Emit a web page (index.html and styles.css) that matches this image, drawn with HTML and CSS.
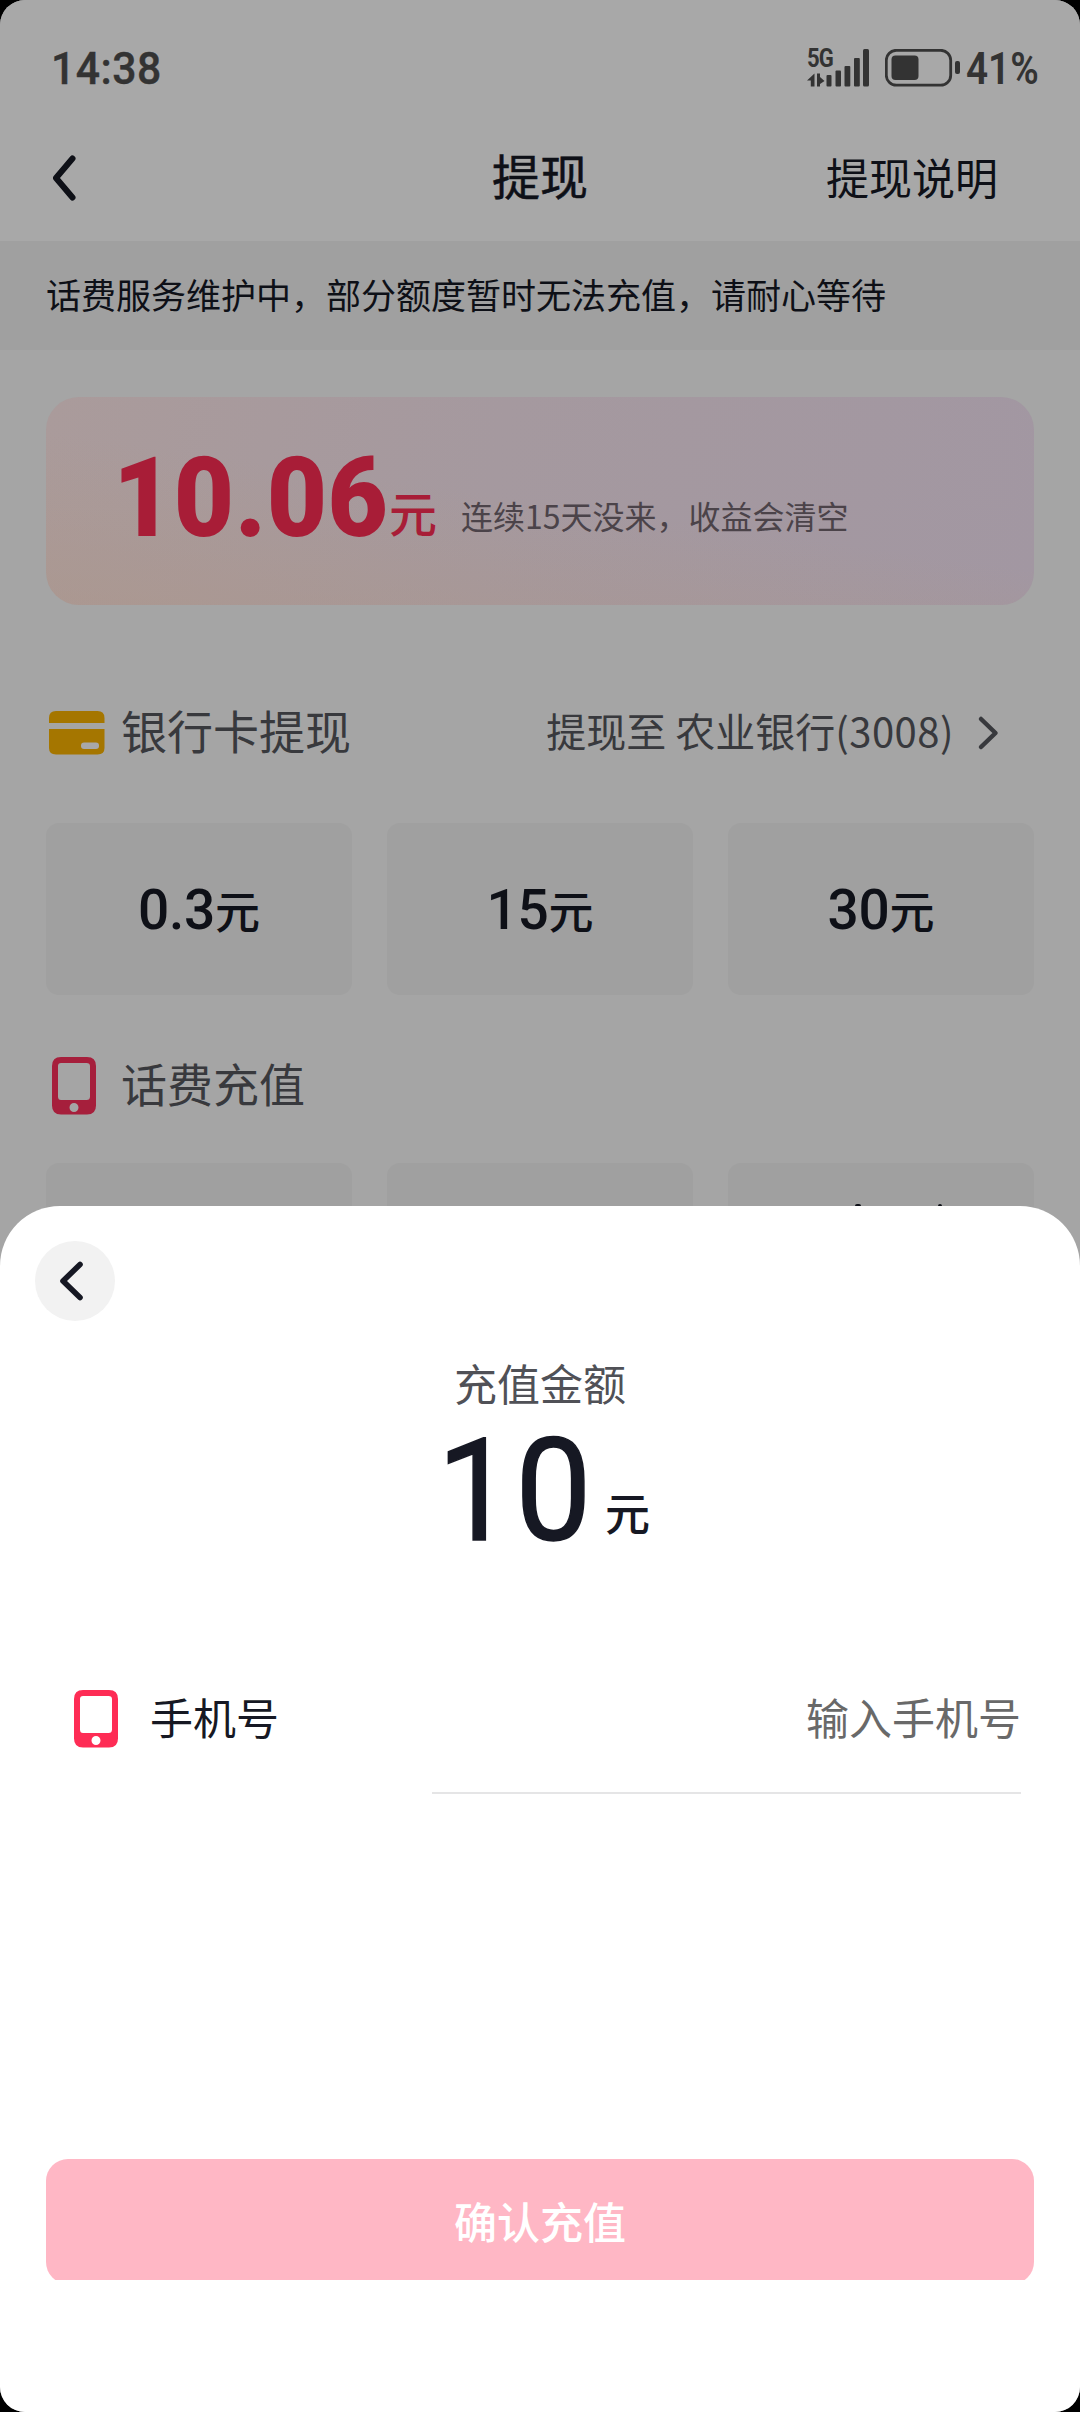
FILE: index.html
```html
<!DOCTYPE html>
<html lang="zh-CN">
<head>
<meta charset="utf-8">
<title>提现</title>
<link rel="stylesheet" href="styles.css">
</head>
<body>
<div class="screen">
  <div class="statusbar">
    <span class="time">14:38</span>
    <div class="status-right">
      <div class="signal">
        <span class="net">5G</span>
        <svg width="62" height="38" viewBox="0 0 62 38" fill="#333">
          <path d="M7.500 24.500V37.500H3.800V31.500H0Z M10 24.500H13V28L17.500 32L13 35V37.500H10Z"/>
          <rect x="19.500" y="26" width="5" height="11.500" rx="1"/>
          <rect x="28.500" y="21.500" width="5.500" height="16" rx="1"/>
          <rect x="37.500" y="17" width="5.800" height="20.500" rx="1"/>
          <rect x="47" y="9" width="5.800" height="28.500" rx="1"/>
          <rect x="56" y="0" width="6" height="37.500" rx="1.500"/>
        </svg>
      </div>
      <svg width="76" height="38" viewBox="0 0 76 38" fill="#333">
        <rect x="1.300" y="1.300" width="64.400" height="34.900" rx="10" fill="none" stroke="#333" stroke-width="2.800"/>
        <rect x="6.500" y="6.500" width="27" height="24.500" rx="4"/>
        <rect x="70" y="12" width="5" height="13" rx="2"/>
      </svg>
      <span class="percent">41%</span>
    </div>
  </div>

  <div class="navbar">
    <svg class="back" width="24" height="48" viewBox="0 0 24 48" fill="none" stroke="#0e1017" stroke-width="6" stroke-linecap="round" stroke-linejoin="round"><path d="M20.500 4.500L4 24L20.500 43.500"/></svg>
    <h1 class="title">提现</h1>
    <a class="help">提现说明</a>
  </div>

  <p class="notice">话费服务维护中，部分额度暂时无法充值，请耐心等待</p>

  <div class="content">
    <div class="balance">
      <span class="balance-num">10.06</span>
      <span class="balance-unit">元</span>
      <span class="balance-tip">连续15天没来，收益会清空</span>
    </div>

    <div class="section-head bank">
      <svg width="56" height="44" viewBox="0 0 56 44">
        <path d="M0 12V7Q0 0 7 0H48.500Q55.500 0 55.500 7V12ZM0 18H55.500V37Q55.500 43.500 48.500 43.500H7Q0 43.500 0 37Z" fill="#a57600"/>
        <rect x="32" y="31.500" width="18" height="6.500" rx="3" fill="#a8a8a8"/>
      </svg>
      <span class="section-title">银行卡提现</span>
      <span class="account">提现至 农业银行<span class="digits">(3008)</span></span>
      <svg width="22" height="36" viewBox="0 0 22 36" fill="none" stroke="#38393d" stroke-width="4.500" stroke-linecap="round" stroke-linejoin="round"><path d="M4 4L18.500 18L4 32"/></svg>
    </div>
    <div class="options">
      <div class="option"><b>0.3</b>元</div>
      <div class="option"><b>15</b>元</div>
      <div class="option"><b>30</b>元</div>
    </div>

    <div class="section-head phone">
      <svg width="44" height="58" viewBox="0 0 44 58">
        <path fill-rule="evenodd" fill="#a61f3c" d="M9 0H35Q44 0 44 9V48.500Q44 57.500 35 57.500H9Q0 57.500 0 48.500V9Q0 0 9 0ZM9 6Q6 6 6 9V39.500Q6 43 9 43H34.500Q38 43 38 39.500V9Q38 6 34.500 6ZM22 46A4.500 4.500 0 1 0 22 55A4.500 4.500 0 1 0 22 46Z"/>
      </svg>
      <span class="section-title">话费充值</span>
    </div>
    <div class="options">
      <div class="option"></div>
      <div class="option"></div>
      <div class="option peek"></div>
    </div>
  </div>

  <div class="sheet">
    <button class="sheet-back">
      <svg width="24" height="40" viewBox="0 0 24 40" fill="none" stroke="#161823" stroke-width="5.600" stroke-linecap="round" stroke-linejoin="round"><path d="M21 3.500L4 20L21 36.500"/></svg>
    </button>
    <div class="sheet-label">充值金额</div>
    <div class="amount"><span class="amount-num">10</span><span class="amount-unit">元</span></div>
    <div class="field">
      <svg width="44" height="58" viewBox="0 0 44 58">
        <path fill-rule="evenodd" fill="#fe2c55" d="M9 0H35Q44 0 44 9V48.500Q44 57.500 35 57.500H9Q0 57.500 0 48.500V9Q0 0 9 0ZM9 6Q6 6 6 9V39.500Q6 43 9 43H34.500Q38 43 38 39.500V9Q38 6 34.500 6ZM22 46A4.500 4.500 0 1 0 22 55A4.500 4.500 0 1 0 22 46Z"/>
      </svg>
      <span class="field-name">手机号</span>
      <span class="field-input">输入手机号</span>
    </div>
    <div class="submit-wrap"><button class="submit">确认充值</button></div>
  </div>
</div>
</body>
</html>
```
FILE: styles.css
```css
* { box-sizing: border-box; margin: 0; padding: 0; }
html, body { background: #000; }
body { font-family: "Noto Sans CJK SC", sans-serif; color: #0e1017; }
button { border: 0; font-family: inherit; }
svg { display: block; flex: none; }

.screen {
  position: relative;
  width: 1080px;
  height: 2412px;
  overflow: hidden;
  border-radius: 25px;
  background: #a5a5a5;
  white-space: nowrap;
}

.statusbar {
  height: 117px;
  padding: 49px 37px 0 51px;
  display: flex;
  justify-content: space-between;
  align-items: flex-start;
  background: #a8a8a8;
  color: #333;
  font-family: Roboto, sans-serif;
}
.time { font-size: 44px; line-height: 40px; font-weight: 500; letter-spacing: .5px; transform: scaleX(.97); transform-origin: left; -webkit-text-stroke: .4px; }
.status-right { display: flex; }
.signal { position: relative; margin-right: 16px; }
.net {
  position: absolute;
  left: 0;
  top: -1px;
  font-size: 26px;
  line-height: 20px;
  font-weight: 700;
  letter-spacing: -1px;
  transform: scaleX(.85);
  transform-origin: left;
}
.percent {
  width: 77px;
  margin-left: 5px;
  font-size: 44px;
  line-height: 40px;
  font-weight: 600;
  transform: scaleX(.88);
  transform-origin: left;
}

.navbar {
  height: 124px;
  padding: 0 82px 3px 52px;
  display: grid;
  grid-template-columns: 1fr auto 1fr;
  align-items: center;
  background: #a8a8a8;
}
.title { font-size: 48px; line-height: 60px; font-weight: 400; -webkit-text-stroke: .5px; transform: translate(15px, -4px); }
.help { justify-self: end; font-size: 43px; line-height: 60px; transform: translateY(-2px); }

.notice {
  height: 109px;
  padding-left: 46px;
  background: #a0a0a0;
  font-size: 35px;
  line-height: 106px;
}

.content { padding: 47px 46px 0; }

.balance {
  height: 208px;
  padding: 0 0 70px 70px;
  display: flex;
  align-items: baseline;
  border-radius: 33px;
  background:
    linear-gradient(8deg, rgba(172, 150, 138, .6), rgba(172, 148, 150, 0) 50%),
    linear-gradient(100deg, #aa9b9b 0%, #a5999f 45%, #a297a2 100%);
}
.balance-num {
  width: 273px;
  margin-left: -3px;
  color: #a81d37;
  font: 900 112px/201px Roboto, sans-serif;
  letter-spacing: .5px;
  transform: scaleX(.93);
  transform-origin: left;
}
.balance-unit { width: 72px; margin-left: 3px; color: #a81d37; font-size: 48px; font-weight: 500; transform: translateY(-4px); }
.balance-tip { font-size: 32px; color: #4b4349; transform: translateY(-7px); }

.section-head { display: flex; align-items: center; height: 60px; color: #38393d; }
.section-title { font-size: 46px; line-height: 60px; transform: translateY(-4px); }
.bank { margin-top: 98px; padding: 0 35px 0 3px; }
.bank .section-title { margin-left: 16px; flex: 1; }
.account { font-size: 40px; line-height: 60px; margin-right: 23px; transform: translateY(-3px); }
.digits { letter-spacing: .5px; }
.phone { margin-top: 61px; padding-left: 6px; }
.phone .section-title { margin-left: 25px; }

.options { display: grid; grid-template-columns: repeat(3, 306px); gap: 35px; margin-top: 60px; }
.option {
  height: 172px;
  border-radius: 13px;
  background: #a0a0a0;
  text-align: center;
  font-size: 45px;
  line-height: 173px;
  font-weight: 500;
}
.option b { font: 500 55px/173px Roboto, sans-serif; letter-spacing: -.3px; }
.phone + .options { margin-top: 47px; }
.peek { position: relative; }
.peek::before, .peek::after {
  content: "";
  position: absolute;
  top: 41px;
  left: 127px;
  width: 6px;
  height: 4px;
  border-radius: 2px 2px 0 0;
  background: #0e1017;
}
.peek::after { left: 210px; width: 4px; }

.sheet {
  position: absolute;
  left: 0;
  right: 0;
  top: 1206px;
  bottom: 0;
  border-radius: 60px 60px 0 0;
  background: #fff;
  color: #161823;
  display: flex;
  flex-direction: column;
}
.sheet-back {
  width: 80px;
  height: 80px;
  margin: 35px 0 0 35px;
  padding-left: 24px;
  border-radius: 50%;
  background: #f2f2f2;
}
.sheet-label { margin-top: 31px; text-align: center; font-size: 43px; line-height: 60px; color: #505157; }
.amount { height: 190px; padding-left: 437px; display: flex; align-items: baseline; }
.amount-num {
  width: 168px;
  font: 400 143px/158px Roboto, sans-serif;
  -webkit-text-stroke: 1.5px;
  letter-spacing: 2px;
  transform: scaleX(.95);
  transform-origin: left;
}
.amount-unit { font-size: 45px; font-weight: 500; transform: translateY(-9px); }
.field { display: flex; align-items: center; height: 116px; margin: 59px 59px 0 74px; position: relative; }
.field::after { content: ""; position: absolute; right: 0; bottom: -17px; width: 589px; height: 2px; background: #e5e5e6; }
.field-name { font-size: 43px; margin-left: 32px; flex: 1; transform: translateY(-3px); }
.field-input { font-size: 43px; color: #696969; transform: translateY(-3px); }
.submit-wrap { height: 121px; margin: 382px 46px 0; overflow: hidden; }
.submit {
  width: 100%;
  height: 125px;
  padding-bottom: 3px;
  border-radius: 22px;
  background: #ffb7c5;
  color: #fff;
  font-size: 43px;
  font-weight: 500;
}
```
